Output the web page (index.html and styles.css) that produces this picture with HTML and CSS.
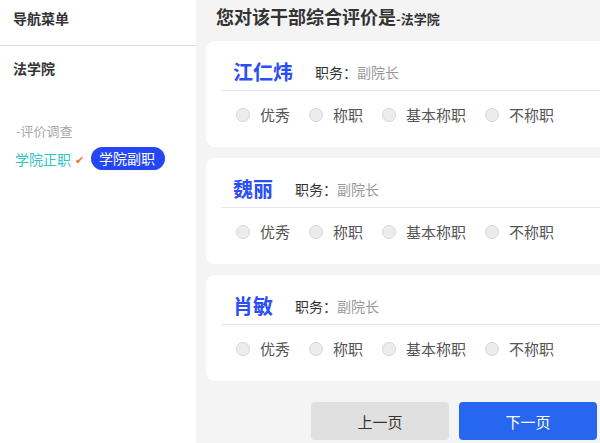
FILE: index.html
```html
<!DOCTYPE html>
<html lang="zh-CN">
  <head>
    <meta charset="UTF-8" />
    <meta name="viewport" content="width=device-width, initial-scale=1.0" />
    <title>干部综合评价</title>
    <link rel="stylesheet" href="styles.css">
  </head>
  <body>
    <aside class="nav">
      <div class="nav-head">导航菜单</div>
      <div class="nav-college">法学院</div>
      <div class="nav-sub">-评价调查</div>
      <div class="nav-tabs">
        <span class="tab-done">学院正职</span>
        <span class="tab-check">✔</span>
        <span class="tab-active">学院副职</span>
      </div>
    </aside>

    <main class="content">
      <h2 class="title">您对该干部综合评价是<small>-法学院</small></h2>

      <article class="card">
        <div class="card-head">
          <span class="name">江仁炜</span>
          <span class="duty">职务：<em>副院长</em></span>
        </div>
        <div class="options">
          <label class="opt"><i></i>优秀</label>
          <label class="opt"><i></i>称职</label>
          <label class="opt"><i></i>基本称职</label>
          <label class="opt"><i></i>不称职</label>
        </div>
      </article>

      <article class="card">
        <div class="card-head">
          <span class="name">魏丽</span>
          <span class="duty">职务：<em>副院长</em></span>
        </div>
        <div class="options">
          <label class="opt"><i></i>优秀</label>
          <label class="opt"><i></i>称职</label>
          <label class="opt"><i></i>基本称职</label>
          <label class="opt"><i></i>不称职</label>
        </div>
      </article>

      <article class="card">
        <div class="card-head">
          <span class="name">肖敏</span>
          <span class="duty">职务：<em>副院长</em></span>
        </div>
        <div class="options">
          <label class="opt"><i></i>优秀</label>
          <label class="opt"><i></i>称职</label>
          <label class="opt"><i></i>基本称职</label>
          <label class="opt"><i></i>不称职</label>
        </div>
      </article>

      <div class="pager">
        <button class="btn btn-prev">上一页</button>
        <button class="btn btn-next">下一页</button>
      </div>
    </main>
  </body>
</html>
```

FILE: styles.css
```css
body {
  margin: 0;
  display: flex;
  height: 443px;
  overflow: hidden;
  font-family: "Noto Sans CJK SC", "Noto Sans", sans-serif;
  color: #333;
  background-color: #f4f4f4;
}

.nav {
  width: 196px;
  flex-shrink: 0;
  background-color: white;
}

.nav-head {
  height: 36px;
  line-height: 36px;
  padding: 0 0 9px 13px;
  font-size: 14px;
  font-weight: bold;
  border-bottom: 1px solid #dedede;
  margin-bottom: 12px;
}

.nav-college {
  padding-left: 13px;
  font-size: 14px;
  font-weight: bold;
  line-height: 20px;
}

.nav-sub {
  margin-top: 43px;
  padding-left: 16px;
  font-size: 13px;
  color: #aaa;
  line-height: 20px;
}

.nav-tabs {
  display: flex;
  align-items: center;
  padding-left: 15px;
  margin-top: 6px;
  font-size: 14px;
}

.tab-done {
  color: #2ec4c8;
}

.tab-check {
  color: #f5732a;
  font-size: 11px;
  margin: 0 7px 0 4px;
}

.tab-active {
  background-color: #2446f5;
  color: white;
  border-radius: 12px;
  height: 23px;
  line-height: 23px;
  padding: 0 10px 0 8px;
}

.content {
  flex: 1;
  padding-left: 10px;
  overflow: hidden;
}

.title {
  margin: 0;
  padding-left: 10px;
  height: 32px;
  line-height: 32px;
  font-size: 18px;
  font-weight: bold;
  color: #333;
}

.title small {
  font-size: 13px;
}

.card {
  background-color: white;
  border-radius: 9px;
  margin: 9px -30px 11px 0;
  padding: 0 0 0 15px;
  height: 106px;
}

.card-head {
  display: flex;
  align-items: center;
  height: 37px;
  padding: 12px 0 0 12px;
  border-bottom: 1px solid #e8e8e8;
}

.name {
  font-size: 20px;
  font-weight: bold;
  color: #2b4ef7;
  margin-right: 22px;
}

.duty {
  font-size: 14px;
  color: #333;
}

.duty em {
  font-style: normal;
  color: #999;
}

.options {
  display: flex;
  gap: 19px;
  padding: 14px 0 0 15px;
}

.opt {
  display: flex;
  align-items: center;
  font-size: 15px;
  color: #555;
  line-height: 20px;
}

.opt i {
  width: 12px;
  height: 12px;
  border: 1px solid #d6d6d6;
  border-radius: 50%;
  background-color: #ececec;
  margin-right: 10px;
}

.pager {
  display: flex;
  justify-content: flex-end;
  gap: 10px;
  padding-right: 3px;
  margin-top: 21px;
}

.btn {
  width: 138px;
  height: 38px;
  border: none;
  border-radius: 4px;
  font-family: inherit;
  font-size: 15px;
  cursor: pointer;
}

.btn-prev {
  background-color: #e0e0e0;
  color: #333;
}

.btn-next {
  background-color: #2767ef;
  color: white;
}
```
